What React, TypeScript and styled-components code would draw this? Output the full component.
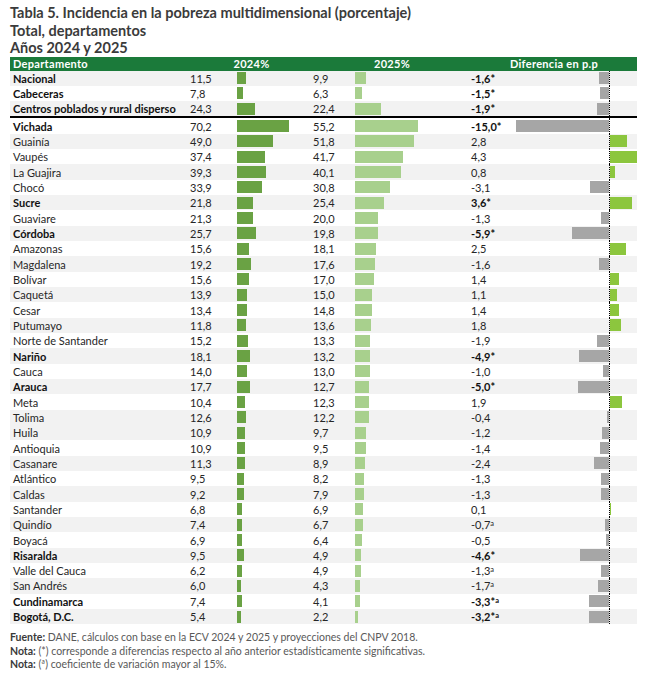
import styled, { createGlobalStyle } from "styled-components";

const GlobalStyle = createGlobalStyle`
  html, body {
    margin: 0;
    padding: 0;
    background: #ffffff;
  }
  body {
    font-family: Lato, "Liberation Sans", sans-serif;
    color: #1a1a1a;
  }
`;

const Page = styled.div`
  width: 650px;
  height: 681px;
  padding: 4px 13px 0 10px;
  box-sizing: border-box;
`;

const Heading = styled.div`
  font-size: 14.5px;
  font-weight: bold;
  line-height: 17.5px;
  color: #3b3b3b;
`;

const Table = styled.div`
  width: 627px;
  display: flex;
  flex-direction: column;
`;

const cols = "180px 47px 76px 42px 116px 45px 93px 28px";

const HeaderRow = styled.div`
  display: grid;
  grid-template-columns: 180px 123px 158px 166px;
  height: 14px;
  background: #1b7a3a;
  color: #ffffff;
  font-size: 11px;
  font-weight: bold;
  line-height: 14px;
  letter-spacing: 0.3px;
`;

const HeadCell = styled.div<{ $center?: boolean }>`
  text-align: ${(p) => (p.$center ? "center" : "left")};
  padding-left: ${(p) => (p.$center ? "0" : "3px")};
`;

const Row = styled.div<{ $shade: boolean }>`
  display: grid;
  grid-template-columns: ${cols};
  height: 15.33px;
  align-items: center;
  background: ${(p) => (p.$shade ? "#f2f2f2" : "#ffffff")};
  font-size: 11px;
  color: #262626;
  white-space: nowrap;
`;

const Divider = styled.div`
  height: 2px;
  background: #000000;
`;

const Name = styled.div<{ $bold: boolean }>`
  padding-left: 3px;
  font-weight: ${(p) => (p.$bold ? "bold" : "normal")};
  color: ${(p) => (p.$bold ? "#111111" : "#262626")};
`;

const Num = styled.div``;

const Diff = styled.div<{ $bold: boolean }>`
  font-weight: ${(p) => (p.$bold ? "bold" : "normal")};
  color: ${(p) => (p.$bold ? "#111111" : "#262626")};
`;

const BarCell = styled.div<{ $align?: "left" | "right" }>`
  height: 100%;
  display: flex;
  align-items: center;
  justify-content: ${(p) => (p.$align === "right" ? "flex-end" : "flex-start")};
`;

const AxisCell = styled(BarCell)`
  border-left: 1px dotted #000000;
  box-sizing: border-box;
`;

const Bar = styled.div<{ $color: string }>`
  height: 12px;
  background: ${(p) => p.$color};
`;

const Mark = styled.sup`
  font-size: 7.5px;
  vertical-align: 3px;
  line-height: 0;
`;

const Notes = styled.div`
  margin-top: 7px;
  font-size: 10.5px;
  line-height: 13.5px;
  color: #595959;
`;

const NoteLabel = styled.b`
  color: #3a3a3a;
`;

type Dep = {
  name: string;
  bold?: boolean;
  v24: number;
  v25: number;
  diff: number;
  star?: boolean;
  a?: boolean;
};

const top: Dep[] = [
  { name: "Nacional", bold: true, v24: 11.5, v25: 9.9, diff: -1.6, star: true },
  { name: "Cabeceras", bold: true, v24: 7.8, v25: 6.3, diff: -1.5, star: true },
  { name: "Centros poblados y rural disperso", bold: true, v24: 24.3, v25: 22.4, diff: -1.9, star: true },
];

const deps: Dep[] = [
  { name: "Vichada", bold: true, v24: 70.2, v25: 55.2, diff: -15.0, star: true },
  { name: "Guainía", v24: 49.0, v25: 51.8, diff: 2.8 },
  { name: "Vaupés", v24: 37.4, v25: 41.7, diff: 4.3 },
  { name: "La Guajira", v24: 39.3, v25: 40.1, diff: 0.8 },
  { name: "Chocó", v24: 33.9, v25: 30.8, diff: -3.1 },
  { name: "Sucre", bold: true, v24: 21.8, v25: 25.4, diff: 3.6, star: true },
  { name: "Guaviare", v24: 21.3, v25: 20.0, diff: -1.3 },
  { name: "Córdoba", bold: true, v24: 25.7, v25: 19.8, diff: -5.9, star: true },
  { name: "Amazonas", v24: 15.6, v25: 18.1, diff: 2.5 },
  { name: "Magdalena", v24: 19.2, v25: 17.6, diff: -1.6 },
  { name: "Bolívar", v24: 15.6, v25: 17.0, diff: 1.4 },
  { name: "Caquetá", v24: 13.9, v25: 15.0, diff: 1.1 },
  { name: "Cesar", v24: 13.4, v25: 14.8, diff: 1.4 },
  { name: "Putumayo", v24: 11.8, v25: 13.6, diff: 1.8 },
  { name: "Norte de Santander", v24: 15.2, v25: 13.3, diff: -1.9 },
  { name: "Nariño", bold: true, v24: 18.1, v25: 13.2, diff: -4.9, star: true },
  { name: "Cauca", v24: 14.0, v25: 13.0, diff: -1.0 },
  { name: "Arauca", bold: true, v24: 17.7, v25: 12.7, diff: -5.0, star: true },
  { name: "Meta", v24: 10.4, v25: 12.3, diff: 1.9 },
  { name: "Tolima", v24: 12.6, v25: 12.2, diff: -0.4 },
  { name: "Huila", v24: 10.9, v25: 9.7, diff: -1.2 },
  { name: "Antioquia", v24: 10.9, v25: 9.5, diff: -1.4 },
  { name: "Casanare", v24: 11.3, v25: 8.9, diff: -2.4 },
  { name: "Atlántico", v24: 9.5, v25: 8.2, diff: -1.3 },
  { name: "Caldas", v24: 9.2, v25: 7.9, diff: -1.3 },
  { name: "Santander", v24: 6.8, v25: 6.9, diff: 0.1 },
  { name: "Quindío", v24: 7.4, v25: 6.7, diff: -0.7, a: true },
  { name: "Boyacá", v24: 6.9, v25: 6.4, diff: -0.5 },
  { name: "Risaralda", bold: true, v24: 9.5, v25: 4.9, diff: -4.6, star: true },
  { name: "Valle del Cauca", v24: 6.2, v25: 4.9, diff: -1.3, a: true },
  { name: "San Andrés", v24: 6.0, v25: 4.3, diff: -1.7, a: true },
  { name: "Cundinamarca", bold: true, v24: 7.4, v25: 4.1, diff: -3.3, star: true, a: true },
  { name: "Bogotá, D.C.", bold: true, v24: 5.4, v25: 2.2, diff: -3.2, star: true, a: true },
];

const fmt = (n: number) => n.toFixed(1).replace(".", ",");

const DataRow = ({ d, shade }: { d: Dep; shade: boolean }) => (
  <Row $shade={shade}>
    <Name $bold={!!d.bold}>{d.name}</Name>
    <Num>{fmt(d.v24)}</Num>
    <BarCell>
      <Bar $color="#6aa244" style={{ width: d.v24 * 0.74 }} />
    </BarCell>
    <Num>{fmt(d.v25)}</Num>
    <BarCell>
      <Bar $color="#a8d08d" style={{ width: d.v25 * 1.14 }} />
    </BarCell>
    <Diff $bold={!!d.star}>
      {fmt(d.diff)}
      {d.star && "*"}
      {d.a && <Mark>a</Mark>}
    </Diff>
    <BarCell $align="right">
      {d.diff < 0 && <Bar $color="#a6a6a6" style={{ width: -d.diff * 6.2 }} />}
    </BarCell>
    <AxisCell>
      {d.diff > 0 && <Bar $color="#8cc63e" style={{ width: d.diff * 6.2 }} />}
    </AxisCell>
  </Row>
);

export default function App() {
  return (
    <Page>
      <GlobalStyle />
      <Heading>Tabla 5. Incidencia en la pobreza multidimensional (porcentaje)</Heading>
      <Heading>Total, departamentos</Heading>
      <Heading>Años 2024 y 2025</Heading>
      <Table>
        <HeaderRow>
          <HeadCell>Departamento</HeadCell>
          <HeadCell $center>2024%</HeadCell>
          <HeadCell $center>2025%</HeadCell>
          <HeadCell $center>Diferencia en p.p</HeadCell>
        </HeaderRow>
        {top.map((d, i) => (
          <DataRow key={d.name} d={d} shade={i % 2 === 0} />
        ))}
        <Divider />
        {deps.map((d, i) => (
          <DataRow key={d.name} d={d} shade={i < 20 ? i % 2 === 1 : i % 2 === 0} />
        ))}
      </Table>
      <Notes>
        <div>
          <NoteLabel>Fuente:</NoteLabel> DANE, cálculos con base en la ECV 2024 y 2025 y proyecciones del CNPV 2018.
        </div>
        <div>
          <NoteLabel>Nota:</NoteLabel> (*) corresponde a diferencias respecto al año anterior estadísticamente significativas.
        </div>
        <div>
          <NoteLabel>Nota:</NoteLabel> (ª) coeficiente de variación mayor al 15%.
        </div>
      </Notes>
    </Page>
  );
}
